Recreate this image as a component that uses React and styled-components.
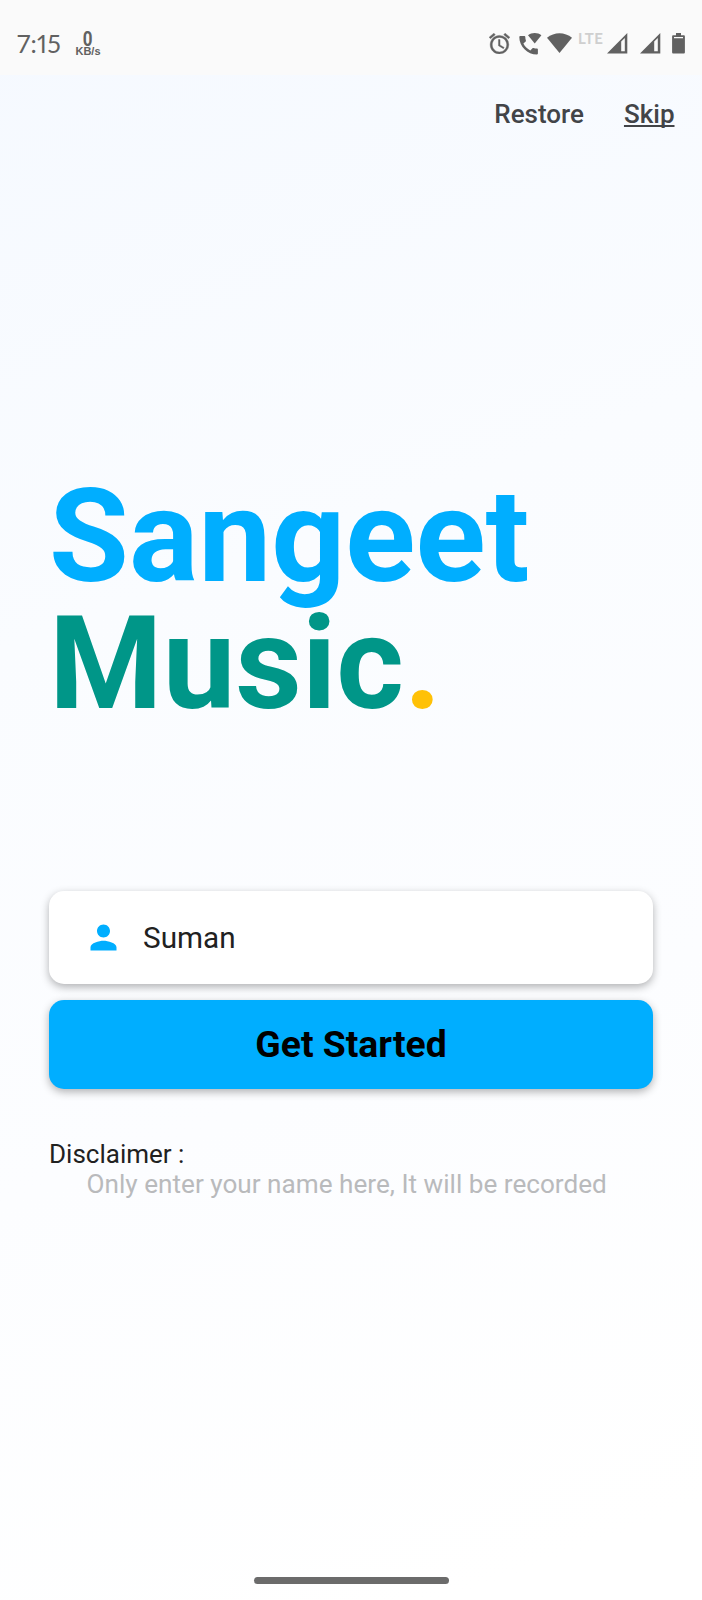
import React from "react";
import styled, { createGlobalStyle } from "styled-components";

const GlobalStyle = createGlobalStyle`
  *, *::before, *::after { box-sizing: border-box; }
  body { margin: 0; background: #fff; font-family: Roboto, "Liberation Sans", sans-serif; }
`;

const Screen = styled.main`
  display: flex;
  flex-direction: column;
  width: 702px;
  height: 1600px;
  overflow: hidden;
  background: linear-gradient(160deg, #f5f9ff 0%, #fafcff 35%, #fcfdff 65%, #ffffff 95%);
`;

const StatusBar = styled.header`
  display: flex;
  justify-content: space-between;
  flex: none;
  height: 75px;
  padding: 31px 17px 0 17px;
  background: #fafafa;
  color: #616161;
`;

const StatusLeft = styled.div`
  display: flex;
  gap: 14px;
`;

const Clock = styled.span`
  width: 44px;
  margin-top: -2px;
  font: 400 25px/28px Lato, sans-serif;
  font-variant-numeric: proportional-nums;
  letter-spacing: 0.3px;
  white-space: nowrap;
`;

const NetSpeed = styled.div`
  display: flex;
  flex-direction: column;
  align-items: center;
  width: 26px;
  font-weight: 700;
`;

const SpeedValue = styled.span`
  font-size: 20px;
  line-height: 16px;
  transform: scaleX(0.85);
`;

const SpeedUnit = styled.span`
  font: 700 11px/9px "Liberation Sans", sans-serif;
`;

const StatusIcons = styled.div`
  display: flex;
  align-items: flex-start;
`;

const StatusIcon = styled.svg`
  display: block;
  flex: none;
  margin: ${(p) => p.$top || 2}px 0 0 ${(p) => p.$gap || 0}px;
  fill: #616161;
`;

const NetworkType = styled.span`
  width: 25px;
  margin: 0 4px 0 6px;
  font: 700 15px/15px Lato, sans-serif;
  letter-spacing: 0.4px;
  color: #cfcfcf;
`;

const TopActions = styled.nav`
  display: flex;
  justify-content: flex-end;
  gap: 40px;
  flex: none;
  padding: 24px 27.5px 0 0;
`;

const TextButton = styled.button`
  padding: 0;
  border: 0;
  background: none;
  color: #424448;
  font: 500 26px/30px Roboto, sans-serif;
  text-decoration: ${(p) => (p.$underlined ? "underline" : "none")};
  text-decoration-thickness: 2px;
  text-underline-offset: 2px;
  text-decoration-skip-ink: none;
`;

const Content = styled.section`
  display: flex;
  flex-direction: column;
  padding: 345px 49px 0;
`;

const Title = styled.h1`
  margin: 0;
  font-size: 129.8px;
  line-height: 127px;
  font-weight: 700;
  color: #00aeff;
`;

const TitleLine = styled.span`
  display: block;
  white-space: nowrap;
  color: ${(p) => p.$color};
`;

const Dot = styled.span`
  color: #ffc107;
`;

const Field = styled.label`
  display: flex;
  align-items: center;
  gap: 20px;
  height: 93px;
  margin-top: 163px;
  padding-left: 35px;
  border-radius: 15px;
  background: #fff;
  box-shadow: 0 3px 8px rgba(0, 0, 0, 0.3);
`;

const PersonIcon = styled.svg`
  flex: none;
  fill: #00aeff;
`;

const FieldValue = styled.span`
  font-size: 29.7px;
  line-height: 36px;
  color: #212121;
`;

const StartButton = styled.button`
  height: 89px;
  margin-top: 16px;
  padding: 0 0 1px;
  border: 0;
  border-radius: 15px;
  background: #00aeff;
  color: #000;
  font: 700 37.3px/44px Roboto, sans-serif;
  box-shadow: 0 3px 8px rgba(0, 0, 0, 0.3);
`;

const Disclaimer = styled.div`
  margin-top: 50px;
  font-size: 26px;
  line-height: 30px;
  color: #212121;
`;

const DisclaimerText = styled.p`
  margin: 0;
  padding-left: 37.6px;
  font-size: 26.15px;
  white-space: nowrap;
  color: #b9babc;
`;

const HomeIndicator = styled.div`
  flex: none;
  width: 195px;
  height: 7px;
  margin: auto auto 16px;
  border-radius: 4px;
  background: #6b6b6b;
`;

const Signal = ({ gap }) => (
  <StatusIcon width="21" height="21" viewBox="0 0 21 21" $gap={gap}>
    <path fillRule="evenodd" d="M20.3 0v20.5H0zM14.2 8.6v9.6h3.6V5z" />
  </StatusIcon>
);

export default function App() {
  return (
    <Screen>
      <GlobalStyle />
      <StatusBar>
        <StatusLeft>
          <Clock>7:15</Clock>
          <NetSpeed>
            <SpeedValue>0</SpeedValue>
            <SpeedUnit>KB/s</SpeedUnit>
          </NetSpeed>
        </StatusLeft>
        <StatusIcons>
          <StatusIcon width="21" height="21" viewBox="2 1.7 20 20.3" stroke="#616161" strokeWidth="0.4">
            <path d="M22 5.72l-4.6-3.86-1.29 1.53 4.6 3.86L22 5.72zM7.88 3.39L6.6 1.86 2 5.71l1.29 1.53 4.59-3.85zM12.5 8H11v6l4.75 2.85.75-1.23-4-2.37V8zM12 4c-4.97 0-9 4.03-9 9s4.02 9 9 9a9 9 0 0 0 0-18zm0 16c-3.87 0-7-3.13-7-7s3.13-7 7-7 7 3.13 7 7-3.13 7-7 7z" />
          </StatusIcon>
          <StatusIcon width="23" height="23" viewBox="0 0 23 23" $gap={9} $top={1}>
            <path d="M1.2 4H5.4C6 4 6.3 4.4 6.3 4.9c0 1.3.2 2.4.6 3.5.1.4 0 .8-.2 1L4.4 11.6c1.5 3 3.9 5.4 6.9 6.9l2.2-2.3c.3-.3.7-.4 1-.2 1.1.4 2.3.6 3.5.6.5 0 .9.4.9.9V21.6c0 .5-.4.9-.9.9C8.4 22.5.3 14.4.3 4.9.3 4.4.7 4 1.2 4z" />
            <path d="M9 3.2C12.6.2 18.8.2 22.4 3.2L15.7 11.5z" />
          </StatusIcon>
          <StatusIcon width="25" height="20" viewBox="0 0 25 20" $gap={5}>
            <path d="M0 4.7C7.2-1.3 17.8-1.3 25 4.7L12.5 20z" />
          </StatusIcon>
          <NetworkType>LTE</NetworkType>
          <Signal />
          <Signal gap={12} />
          <StatusIcon width="13" height="21" viewBox="0 0 13 21" $gap={11}>
            <path d="M4 0h5v2.2h2.6c.8 0 1.3.5 1.3 1.3v15.7c0 .8-.5 1.3-1.3 1.3H1.4c-.8 0-1.3-.5-1.3-1.3V3.5c0-.8.5-1.3 1.3-1.3H4zM2 4v1.3h9V4z" fillRule="evenodd" />
          </StatusIcon>
        </StatusIcons>
      </StatusBar>
      <TopActions>
        <TextButton>Restore</TextButton>
        <TextButton $underlined>Skip</TextButton>
      </TopActions>
      <Content>
        <Title>
          <TitleLine>Sangeet</TitleLine>
          <TitleLine $color="#009688">
            Music<Dot>.</Dot>
          </TitleLine>
        </Title>
        <Field>
          <PersonIcon width="39" height="39" viewBox="0 0 24 24">
            <path d="M12 12c2.21 0 4-1.79 4-4s-1.79-4-4-4-4 1.79-4 4 1.79 4 4 4zm0 2c-2.67 0-8 1.34-8 4v2h16v-2c0-2.66-5.33-4-8-4z" />
          </PersonIcon>
          <FieldValue>Suman</FieldValue>
        </Field>
        <StartButton>Get Started</StartButton>
        <Disclaimer>
          Disclaimer :
          <DisclaimerText>Only enter your name here, It will be recorded</DisclaimerText>
        </Disclaimer>
      </Content>
      <HomeIndicator />
    </Screen>
  );
}
